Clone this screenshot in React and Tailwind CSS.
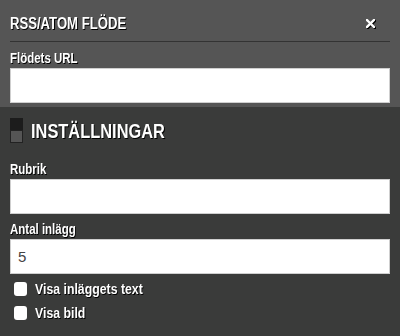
import { useState } from 'react';

const cond = { fontFamily: '"Liberation Sans", Arial, sans-serif' };

function Narrow({ children, className = '' }) {
  return (
    <span
      className={`inline-block origin-left scale-x-[0.82] whitespace-nowrap font-bold text-white [text-shadow:1px_1px_0_#000] ${className}`}
      style={cond}
    >
      {children}
    </span>
  );
}

function Field({ label, value, className = '' }) {
  return (
    <div className={className}>
      <div className="h-[16px] text-[14px] leading-[16px]">
        <Narrow>{label}</Narrow>
      </div>
      <input
        defaultValue={value}
        className="mt-[2px] block h-[35px] w-full border border-[#cfcfcf] bg-white px-[7px] text-[15px] text-[#444] outline-none"
        style={{ fontFamily: '"Liberation Sans", Arial, sans-serif' }}
      />
    </div>
  );
}

function Check({ label, className = '' }) {
  const [on, setOn] = useState(false);
  return (
    <label className={`flex items-center gap-[8px] pl-[4px] ${className}`}>
      <input
        type="checkbox"
        checked={on}
        onChange={() => setOn(!on)}
        className="h-[14px] w-[13px] appearance-none rounded-[3px] bg-white"
      />
      <span className="text-[15px] leading-[16px]">
        <Narrow>{label}</Narrow>
      </span>
    </label>
  );
}

export default function App() {
  return (
    <div className="h-[336px] w-[400px] overflow-hidden bg-[#3a3b3a]">
      <div className="bg-[#555555] px-[10px] pb-[4px]">
        <div className="flex h-[42px] items-center justify-between border-b border-[#333] pt-[6px]">
          <h1 className="text-[16px] leading-[18px]">
            <Narrow>RSS/ATOM FLÖDE</Narrow>
          </h1>
          <button className="mr-[15px] flex items-center" aria-label="Stäng">
            <svg width="9" height="9" viewBox="0 0 9 9" className="drop-shadow-[1px_1px_0_#000]">
              <path d="M1 1 L8 8 M8 1 L1 8" stroke="#fff" strokeWidth="2.4" strokeLinecap="square" />
            </svg>
          </button>
        </div>
        <Field label="Flödets URL" className="pt-[8px]" />
      </div>

      <div className="px-[10px]">
        <div className="flex items-center gap-[8px] pt-[11px]">
          <div className="flex h-[25px] w-[13px] flex-col">
            <div className="h-[12px] bg-[#1c1c1c]" />
            <div className="h-[13px] border border-[#222] bg-[#555]" />
          </div>
          <h2 className="text-[20px] leading-[24px]">
            <Narrow>INSTÄLLNINGAR</Narrow>
          </h2>
        </div>
        <Field label="Rubrik" className="pt-[18px]" />
        <Field label="Antal inlägg" value="5" className="pt-[7px]" />
        <Check label="Visa inläggets text" className="pt-[6px]" />
        <Check label="Visa bild" className="pt-[7px]" />
      </div>
    </div>
  );
}
